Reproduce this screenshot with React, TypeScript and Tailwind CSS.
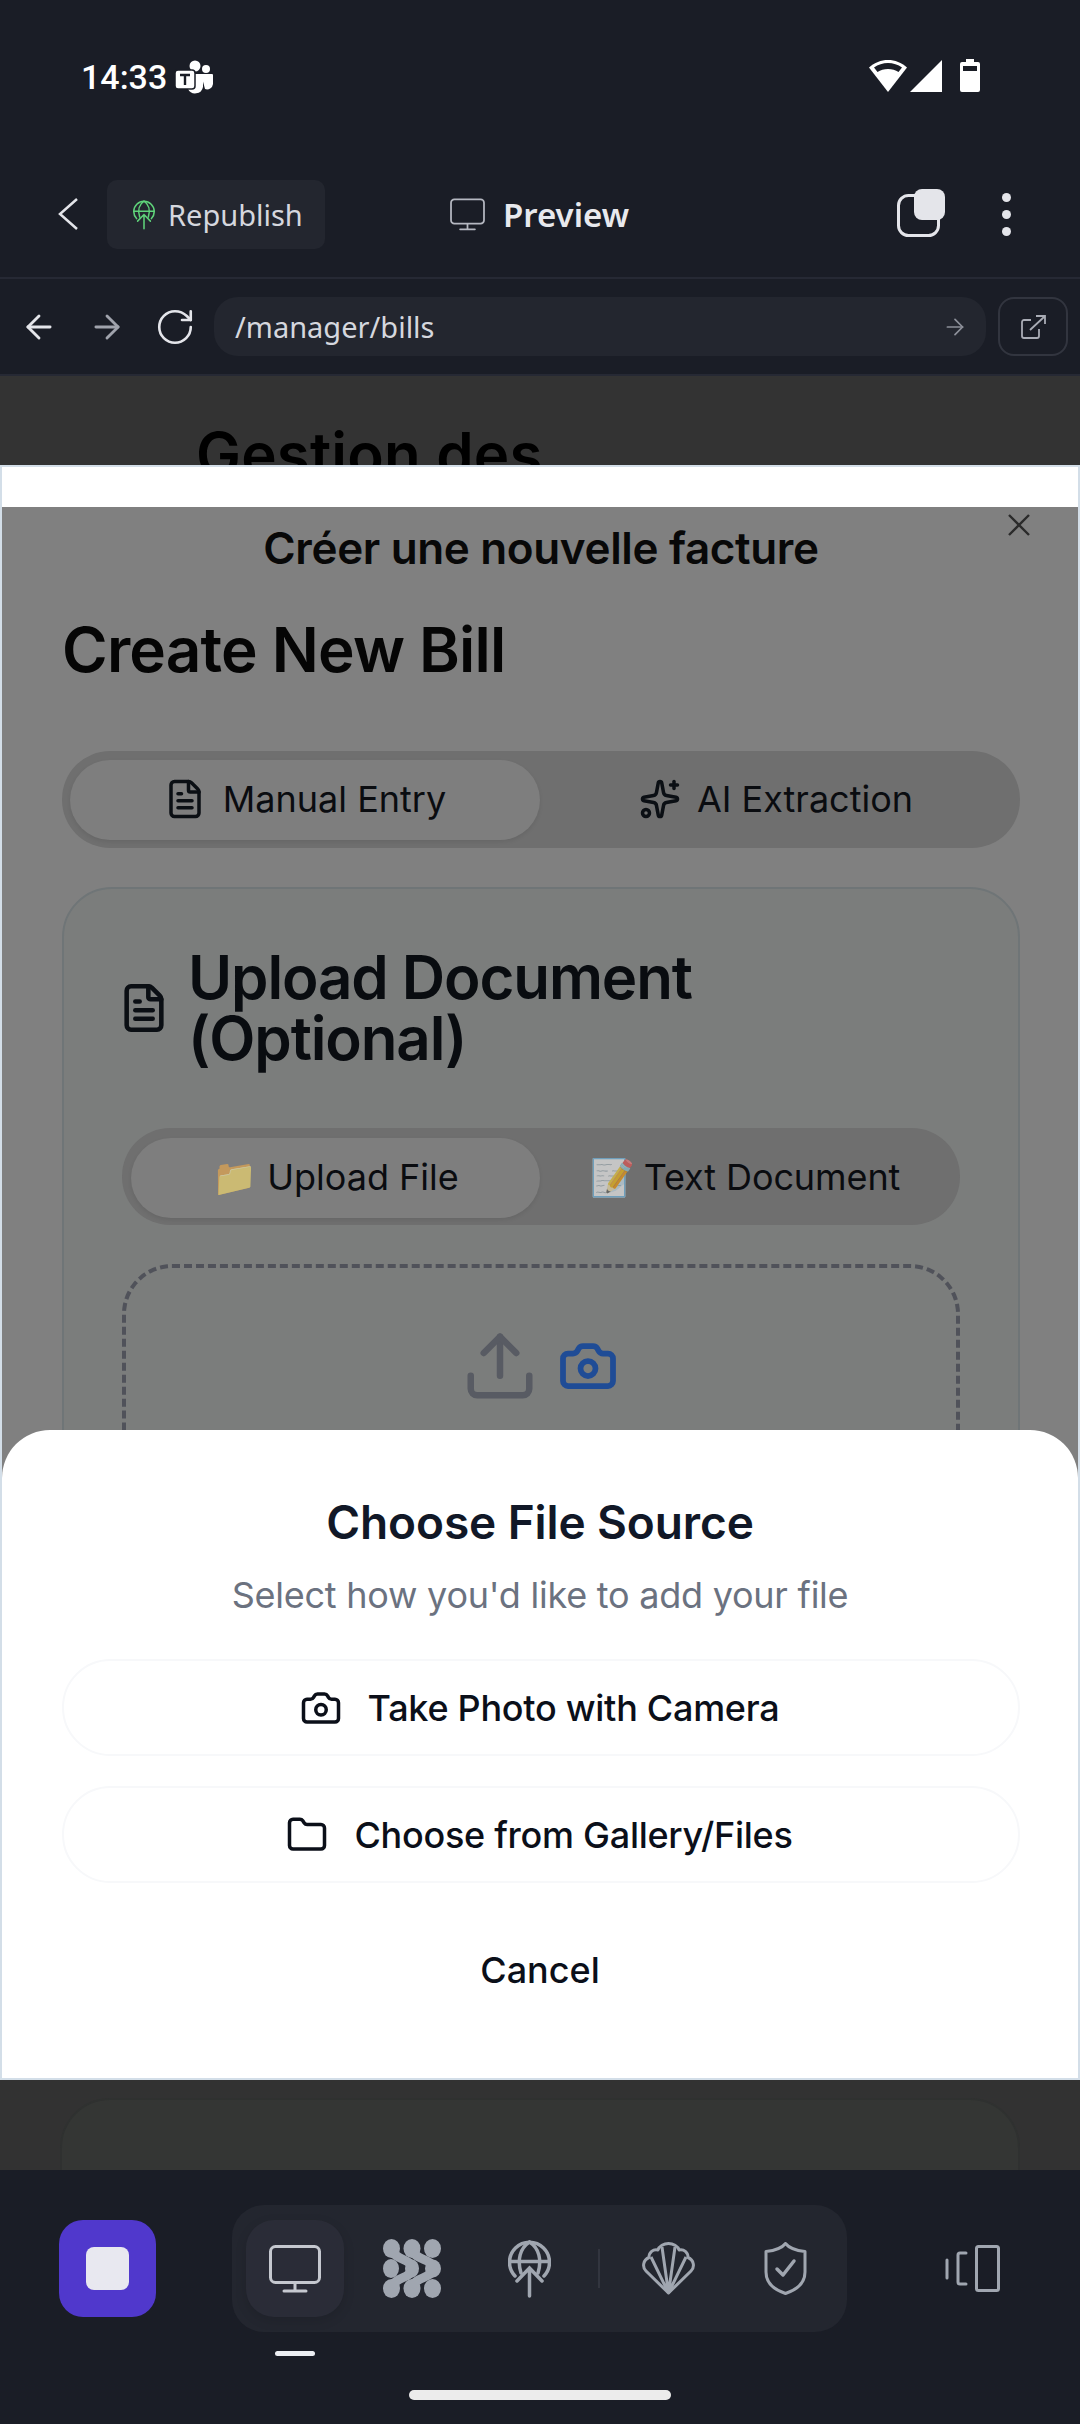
import React from "react";
import { FileText, Sparkles, Camera, Upload, Folder, ArrowLeft, ArrowRight, RotateCw } from "lucide-react";

const inter = "font-['Inter',sans-serif]";

function Teams() {
  return (
    <svg width="38" height="35" viewBox="0 0 38 35" className="ml-[8px]">
      <circle cx="20" cy="6" r="5.5" fill="#fff" />
      <circle cx="31" cy="9" r="4" fill="#fff" />
      <path d="M26 14h11a1 1 0 0 1 1 1v9a6 6 0 0 1-8 5z" fill="#fff" />
      <path d="M13 14h15v13a8 8 0 0 1-15 2z" fill="#fff" />
      <rect x="0" y="10" width="20" height="19" rx="3" fill="#fff" stroke="#1a1d26" strokeWidth="1.5" />
      <path d="M5 15h10M10 15v10" stroke="#1a1d26" strokeWidth="2.4" fill="none" />
    </svg>
  );
}

function StatusIcons() {
  return (
    <div className="flex items-center mr-[100px]">
      <svg width="38" height="32" viewBox="0 0 38 32">
        <path d="M19 0C12 0 5.500 2.600 0 7.500L19 32 38 7.500C32.500 2.600 26 0 19 0z" fill="#fff" />
        <path d="M5 7.500C9 4.500 14 3 19 3s10 1.500 14 4.500l-3.500 4.500C26.500 10 23 9 19 9s-7.500 1-10.500 3z" fill="#1a1d26" />
      </svg>
      <svg width="32" height="32" viewBox="0 0 32 32" className="ml-[3px]">
        <path d="M32 0V32H0z" fill="#fff" />
      </svg>
      <svg width="20" height="33" viewBox="0 0 20 33" className="ml-[18px]">
        <path d="M6 0h8v3h4a2 2 0 0 1 2 2v26a2 2 0 0 1-2 2H2a2 2 0 0 1-2-2V5a2 2 0 0 1 2-2h4z" fill="#fff" />
        <rect x="3" y="7" width="14" height="5" fill="#1a1d26" />
      </svg>
    </div>
  );
}

function GlobeUp({ color, w, h, sw }: { color: string; w: number; h: number; sw: number }) {
  return (
    <svg width={w} height={h} viewBox="0 0 43 58" fill="none" stroke={color} strokeWidth={sw} strokeLinecap="round">
      <path d="M7 36A20 20 0 1 1 36 36" />
      <path d="M13 33C9 20 12 8 21.500 2c9.500 6 12.500 18 8.500 31" />
      <path d="M2 21.500H41" />
      <path d="M21.500 56V28M9 41 21.500 28 34 41" />
    </svg>
  );
}

function Monitor({ color, w, h, sw }: { color: string; w: number; h: number; sw: number }) {
  return (
    <svg width={w} height={h} viewBox="0 0 52 48" fill="none" stroke={color} strokeWidth={sw} strokeLinecap="round">
      <rect x="1.500" y="1.500" width="49" height="36" rx="5" />
      <path d="M26 38v8M15 46h22" />
    </svg>
  );
}

function CopyBoxes() {
  return (
    <svg width="48" height="48" viewBox="0 0 48 48" fill="none">
      <rect x="1.500" y="6.500" width="40" height="40" rx="10" stroke="#e4e5ea" strokeWidth="3" />
      <rect x="17" y="0" width="31" height="31" rx="8" fill="#e4e5ea" />
    </svg>
  );
}

function ExternalIcon() {
  return (
    <svg width="25" height="24" viewBox="0 0 25 24" fill="none" stroke="#a9acb5" strokeWidth="1.800">
      <path d="M10 5H3a2 2 0 0 0-2 2v14a2 2 0 0 0 2 2h13a2 2 0 0 0 2-2v-7" />
      <path d="M9 15 23 2M15 1h9v8" />
    </svg>
  );
}

function Blobs() {
  return (
    <svg width="58" height="59" viewBox="0 0 58 59" fill="#a0a6b0">
      <ellipse cx="8.500" cy="9.500" rx="8.500" ry="9.500" />
      <ellipse cx="29" cy="9.500" rx="8.500" ry="9.500" />
      <ellipse cx="49.500" cy="9.500" rx="8.500" ry="9.500" />
      <ellipse cx="8" cy="29.500" rx="8" ry="9.500" />
      <ellipse cx="29" cy="29.500" rx="7" ry="9" />
      <ellipse cx="50" cy="29.500" rx="8" ry="9" />
      <ellipse cx="8.500" cy="49.500" rx="8.500" ry="9.500" />
      <ellipse cx="29" cy="49.500" rx="8.500" ry="9.500" />
      <ellipse cx="49.500" cy="49.500" rx="8.500" ry="9.500" />
      <g fill="none" stroke="#a0a6b0" strokeWidth="9">
        <path d="M9 10C11 22 29 19 29 29.500 29 40 11 37 9 49" />
        <path d="M29 10C31 22 50 19 50 29.500 50 40 31 37 29 49" />
      </g>
    </svg>
  );
}

function Shell() {
  return (
    <svg width="53" height="53" viewBox="0 0 53 53" fill="none" stroke="#a0a6b0" strokeWidth="3" strokeLinejoin="round">
      <path d="M26.500 51 4 29C0 25 1 18 7 15.500 7 10 11 7 16 8 17 4 22 1.500 26.500 1.500S36 4 37 8C42 7 46 10 46 15.500 52 18 53 25 49 29z" />
      <path d="M26.500 51 20 5M26.500 51 33 5M26.500 51 9 15M26.500 51 44 15" />
      <path d="M26.500 52 20 45H33z" fill="#a0a6b0" stroke="none" />
    </svg>
  );
}

function ShieldMark() {
  return (
    <svg width="43" height="53" viewBox="0 0 43 53" fill="none" stroke="#a0a6b0" strokeWidth="3" strokeLinecap="round" strokeLinejoin="round">
      <path d="M21.500 1.500C25 6 32 8.500 41 9.500V30C41 41 32 48 21.500 51.500 11 48 2 41 2 30V9.500C11 8.500 18 6 21.500 1.500z" />
      <path d="M13 27l6 6 11-14" strokeWidth="3.500" />
    </svg>
  );
}

function Devices() {
  return (
    <svg width="55" height="47" viewBox="0 0 55 47" fill="none" stroke="#a0a6b0" strokeWidth="3" strokeLinecap="round">
      <rect x="31.500" y="1.500" width="22" height="44" rx="2" />
      <path d="M21 8h-6a2 2 0 0 0-2 2v27a2 2 0 0 0 2 2h6" />
      <path d="M2 15v18" />
    </svg>
  );
}

function SegTab({ active, width, children }: { active?: boolean; width: string; children: React.ReactNode }) {
  return (
    <div
      className={`flex items-center justify-center h-[80px] pb-[2px] rounded-[40px] ${width} ${
        active ? "bg-[#7e7e7e] shadow-[0_2px_4px_rgba(0,0,0,0.08)]" : ""
      }`}
    >
      {children}
    </div>
  );
}

function SheetButton({ children }: { children: React.ReactNode }) {
  return (
    <div className="flex items-center justify-center h-[97px] pr-[3px] rounded-full border-2 border-[#f7f8fa] bg-white text-[36px] font-medium tracking-[-0.27px] text-[#0b0f19]">
      {children}
    </div>
  );
}

function NavSlot({ children, active }: { children: React.ReactNode; active?: boolean }) {
  return (
    <div className={`flex items-center justify-center w-[98px] h-[97px] rounded-[28px] ${active ? "bg-[#2a2c37] shadow-[0_4px_12px_rgba(0,0,0,0.12)]" : ""}`}>
      {children}
    </div>
  );
}

export default function App() {
  return (
    <div className={`w-[1080px] h-[2424px] flex flex-col overflow-hidden bg-[#1a1d26] ${inter}`}>
      {/* Status bar */}
      <div className="h-[180px] flex justify-between items-start pt-[59px] pl-[81px] shrink-0">
        <div className="flex items-center h-[36px]">
          <span className="font-['Roboto',sans-serif] font-medium text-[34px] leading-[36px] text-white">14:33</span>
          <Teams />
        </div>
        <StatusIcons />
      </div>

      {/* App header */}
      <div className="h-[99px] shrink-0 border-b-2 border-[#262934] flex items-start pl-[58px]">
        <svg width="20" height="32" viewBox="0 0 20 32" fill="none" stroke="#e4e5ea" strokeWidth="2.500" className="mt-[18px]">
          <path d="M19 1 2 16l17 15" />
        </svg>
        <div className="ml-[29px] w-[218px] h-[69px] rounded-[10px] bg-[#23262f] flex items-center pl-[26px]">
          <GlobeUp color="#5fd37a" w={22} h={30} sw={3} />
          <span className="ml-[13px] text-[29px] text-[#d5d7de] font-['Noto_Sans',sans-serif]">Republish</span>
        </div>
        <div className="ml-[125px] w-[447px] h-[69px] flex items-center">
          <Monitor color="#b5b8c1" w={35} h={33} sw={2.600} />
          <span className="ml-[18px] text-[33px] font-semibold text-[#e8e9ed] font-['Noto_Sans',sans-serif]">Preview</span>
        </div>
        <div className="mt-[9px]">
          <CopyBoxes />
        </div>
        <div className="ml-[57px] mt-[13px] flex flex-col gap-[8px]">
          <div className="w-[9px] h-[9px] rounded-full bg-[#e4e5ea]" />
          <div className="w-[9px] h-[9px] rounded-full bg-[#e4e5ea]" />
          <div className="w-[9px] h-[9px] rounded-full bg-[#e4e5ea]" />
        </div>
      </div>

      {/* URL bar */}
      <div className="h-[97px] shrink-0 border-b-2 border-[#262934] flex items-start pt-[18px] pl-[20px]">
        <div className="h-[59px] flex items-center">
          <ArrowLeft size={38} strokeWidth={1.800} color="#e4e5ea" />
          <ArrowRight size={38} strokeWidth={1.800} color="#a0a3ac" className="ml-[30px]" />
          <RotateCw size={42} strokeWidth={1.500} color="#e4e5ea" className="ml-[28px]" />
        </div>
        <div className="ml-[18px] w-[772px] h-[59px] rounded-[24px] bg-[#23262f] flex items-center justify-between pl-[21px] pr-[18px]">
          <span className="text-[29px] text-[#d5d7de] font-['Noto_Sans',sans-serif]">/manager/bills</span>
          <ArrowRight size={26} strokeWidth={1.600} color="#8d909a" />
        </div>
        <div className="ml-[12px] w-[70px] h-[59px] rounded-[16px] border-2 border-[#32353f] flex items-center justify-center">
          <ExternalIcon />
        </div>
      </div>

      {/* Page behind */}
      <div className="h-[89px] shrink-0 overflow-hidden bg-[#333333] pt-[42px] pl-[196px]">
        <div className="text-[60px] leading-[72px] font-semibold text-black tracking-[0.2px]">Gestion des</div>
      </div>

      {/* Web dialog frame */}
      <div className="h-[1615px] shrink-0 flex flex-col border-2 border-[#d3dee8] bg-white">
        <div className="h-[40px] shrink-0 bg-white" />
        <div className="relative flex-1 overflow-hidden bg-[#808080] pl-[60px] pr-[58px] pt-[16px]">
          <svg width="22" height="22" viewBox="0 0 22 22" className="absolute right-[48px] top-[7px]" stroke="#2b2b2b" strokeWidth="2.400">
            <path d="M1 1l20 20M21 1 1 21" />
          </svg>
          <div className="text-center text-[44px] leading-[50px] font-semibold text-[#080808] tracking-[-0.35px]">Créer une nouvelle facture</div>
          <div className="mt-[41px] text-[62px] leading-[72px] font-semibold text-[#050505] tracking-[-0.8px]">Create New Bill</div>

          <div className="mt-[65px] h-[97px] rounded-[48px] bg-[#6f6f6f] pl-[8px] pr-[2px] pt-[9px] flex">
            <SegTab active width="w-[470px]">
              <FileText size={42} strokeWidth={2} color="#0b0f14" />
              <span className="ml-[17px] text-[36px] text-[#0a0c10]">Manual Entry</span>
            </SegTab>
            <SegTab width="w-[472px]">
              <Sparkles size={42} strokeWidth={2} color="#0b0f14" />
              <span className="ml-[16px] text-[36px] text-[#0a0c10]">AI Extraction</span>
            </SegTab>
          </div>

          <div className="mt-[39px] h-[900px] rounded-[50px] border-2 border-[#6f7577] bg-[#7b7d7c] pt-[58px] px-[58px]">
            <div className="flex items-center -ml-[4px]">
              <FileText size={52} strokeWidth={2.100} color="#0b0f14" className="shrink-0" />
              <div className="ml-[18px] text-[60px] leading-[61px] font-semibold text-[#090c10] tracking-[-1.100px]">
                Upload Document
                <br />
                (Optional)
              </div>
            </div>
            <div className="mt-[59px] h-[97px] rounded-[48px] bg-[#6f6f6f] pl-[9px] pr-[3px] pt-[10px] flex">
              <SegTab active width="w-[409px]">
                <span className="text-[36px] text-[#0a0c10] flex items-center">
                  <span className="opacity-60 mr-[10px] text-[36px] leading-none">📁</span>Upload File
                </span>
              </SegTab>
              <SegTab width="w-[413px]">
                <span className="text-[36px] text-[#0a0c10] flex items-center tracking-[-0.1px] pr-[3px]">
                  <span className="opacity-60 mr-[9px] text-[36px] leading-none">📝</span>Text Document
                </span>
              </SegTab>
            </div>
            <div className="mt-[39px] h-[500px] rounded-[50px] border-[4px] border-dashed border-[#50525a] flex justify-center items-start pt-[59px]">
              <div className="flex items-center">
                <Upload size={78} strokeWidth={2} color="#585b63" className="-ml-[3px]" />
                <Camera size={60} strokeWidth={2.300} color="#1f4c96" className="ml-[19px] -mt-[1px]" />
              </div>
            </div>
          </div>

          {/* Bottom sheet */}
          <div className="absolute left-0 right-0 bottom-0 h-[648px] bg-white rounded-t-[48px] px-[60px] pr-[58px] pt-[65px]">
            <div className="text-center pr-[2px] text-[46px] leading-[54px] font-semibold text-[#111827] tracking-[-0.1px]">Choose File Source</div>
            <div className="mt-[25px] text-center pr-[2px] text-[36px] leading-[42px] text-[#6b7280] tracking-[-0.24px]">Select how you'd like to add your file</div>
            <div className="mt-[43px] flex flex-col gap-[30px]">
              <SheetButton>
                <Camera size={42} strokeWidth={2} color="#0b0f19" />
                <span className="ml-[26px]">Take Photo with Camera</span>
              </SheetButton>
              <SheetButton>
                <Folder size={42} strokeWidth={2} color="#0b0f19" />
                <span className="ml-[26px]">Choose from Gallery/Files</span>
              </SheetButton>
            </div>
            <div className="mt-[39px] h-[96px] pr-[2px] flex items-center justify-center text-[36px] font-medium text-[#0b0f19]">Cancel</div>
          </div>
        </div>
      </div>

      {/* Page behind, lower */}
      <div className="h-[90px] shrink-0 overflow-hidden bg-[#323232] pt-[18px] px-[60px]">
        <div className="h-[200px] rounded-t-[50px] border-2 border-[#2f3130] bg-[#343634]" />
      </div>

      {/* Bottom nav */}
      <div className="flex-1 flex flex-col bg-[#1a1d26]">
        <div className="flex items-start pt-[35px] pl-[59px]">
          <div className="mt-[15px] w-[97px] h-[97px] rounded-[24px] bg-[#5038cc] flex items-center justify-center">
            <div className="w-[43px] h-[43px] rounded-[8px] bg-[#e8e8f0]" />
          </div>
          <div className="ml-[76px] w-[615px] h-[127px] rounded-[32px] bg-[#23262f] flex items-start pt-[15px] pl-[14px]">
            <NavSlot active>
              <Monitor color="#c5c8cf" w={52} h={48} sw={3} />
            </NavSlot>
            <div className="ml-[39px] w-[58px] h-[97px] flex items-center"><Blobs /></div>
            <div className="ml-[67px] w-[43px] h-[97px] flex items-center"><GlobeUp color="#a0a6b0" w={43} h={58} sw={3.500} /></div>
            <div className="ml-[47px] w-[2px] h-[39px] mt-[29px] bg-[#32353f]" />
            <div className="ml-[42px] w-[53px] h-[97px] flex items-center"><Shell /></div>
            <div className="ml-[69px] w-[43px] h-[97px] flex items-center"><ShieldMark /></div>
          </div>
          <div className="ml-[98px] mt-[40px]"><Devices /></div>
        </div>
        <div className="ml-[275px] mt-[19px] w-[40px] h-[5px] rounded-full bg-[#eceef2]" />
        <div className="ml-[409px] mt-[34px] w-[262px] h-[10px] rounded-full bg-[#ececec]" />
      </div>
    </div>
  );
}
